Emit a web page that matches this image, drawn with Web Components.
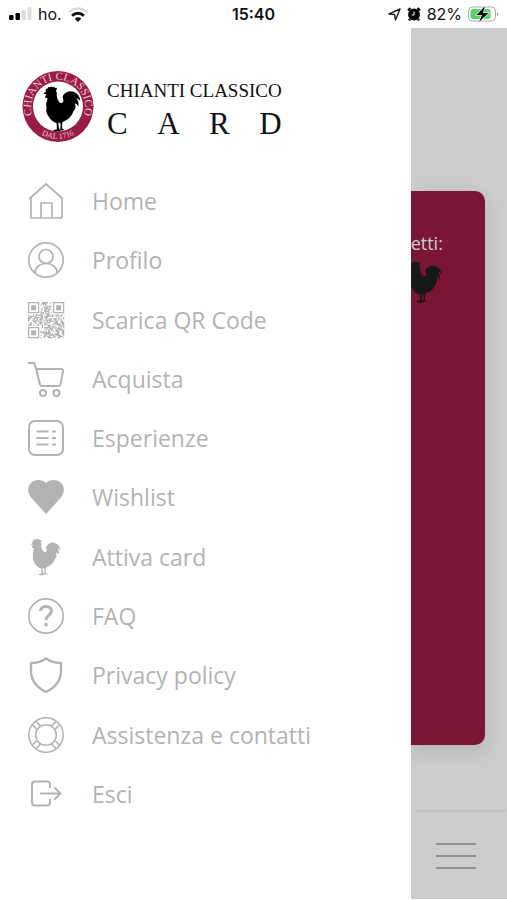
<!DOCTYPE html>
<html lang="it">
<head>
<meta charset="utf-8">
<meta name="viewport" content="width=device-width, initial-scale=1">
<title>Chianti Classico Card</title>
<style>
html, body { margin: 0; background: #fff; }
body { font-family: "Open Sans", "Noto Sans", sans-serif; }
</style>
</head>
<body>
<app-shell>
  <status-bar slot="status"></status-bar>
  <side-drawer slot="drawer">
    <brand-logo slot="brand"></brand-logo>
    <menu-item icon="home">Home</menu-item>
    <menu-item icon="user">Profilo</menu-item>
    <menu-item icon="qr">Scarica QR Code</menu-item>
    <menu-item icon="cart">Acquista</menu-item>
    <menu-item icon="list">Esperienze</menu-item>
    <menu-item icon="heart">Wishlist</menu-item>
    <menu-item icon="rooster">Attiva card</menu-item>
    <menu-item icon="help">FAQ</menu-item>
    <menu-item icon="shield">Privacy policy</menu-item>
    <menu-item icon="ring">Assistenza e contatti</menu-item>
    <menu-item icon="exit">Esci</menu-item>
  </side-drawer>
  <dimmed-page slot="page">etti:</dimmed-page>
</app-shell>
<script>
const ROOSTER = 'M85 89 L93 82 Q90 73 98 74 Q98 67 105 70 Q110 65 113 70 Q120 66 119 72 L125 71 Q128 75 123 80 Q127 85 125 94 Q126 108 134 116 Q141 119 145 113 Q147 107 143 101 Q144 90 155 85 Q168 78 179 85 Q194 91 196 111 Q190 103 184 103 Q193 112 190 128 Q185 118 180 119 Q185 132 175 143 Q170 160 155 168 Q146 171 142 176 L141 193 L149 199 L136 200 L137 179 L130 176 L132 193 L138 202 L122 203 L113 199 L126 196 L125 178 Q108 172 101 158 Q91 146 95 130 Q91 121 97 109 L97 101 Q89 105 91 96 L94 91 Z';

function qrModules() {
  const n = 29;
  let seed = 1716, d = '';
  const inFinder = (x, y) => (x < 10 && y < 10) || (x > n - 11 && y < 10) || (x < 10 && y > n - 11);
  for (let y = 0; y < n; y++) for (let x = 0; x < n; x++) {
    seed = (seed * 1103515245 + 12345) % 2147483648;
    if (!inFinder(x, y) && (seed >> 12) % 100 < 56) d += `M${x} ${y}h1v1h-1z`;
  }
  for (const [x, y] of [[0, 0], [n - 9, 0], [0, n - 9]])
    d += `M${x} ${y}h9v9h-9zM${x + 1} ${y + 1}v7h7v-7zM${x + 2.5} ${y + 2.5}h4v4h-4z`;
  return d;
}

const STRAP = 'M15.500 1.200V7.800M20.500 1.200V7.800';
const ICONS = {
  home: '<path d="M1 16 18 1l17 15M3 14v21h31V14M13 35V20h11v15" stroke-width="1.700"/>',
  user: '<circle cx="18" cy="18" r="17.200" stroke-width="1.700"/><circle cx="18" cy="14.500" r="7" stroke-width="1.700"/><path d="M7 31c0-6 5-9.500 11-9.500S29 25 29 31" stroke-width="1.700"/>',
  qr: `<path transform="scale(1.25)" fill="currentColor" stroke="none" d="${qrModules()}"/>`,
  cart: '<path d="M0 2h6.500l5.500 21.500c.4 1.200 1 1.500 2 1.500h16.500c1 0 1.500-.5 2-1.500L35 10c.2-1.200-.4-2-1.500-2H8"/><circle cx="15" cy="32" r="3"/><circle cx="28.500" cy="32" r="3"/>',
  list: '<rect x="1" y="1" width="34" height="34" rx="6"/><path d="M8.500 11.500h12M24 11.500h4M8.500 18h12M24 18h4M8.500 24.500h12M24 24.500h4" stroke-width="2.200"/>',
  heart: '<path fill="currentColor" stroke="none" d="M18 35 3.500 19C-1 13.500-1 7.500 3.500 3.500 8 0 14.500.5 18 4 21.500.5 28 0 32.500 3.500 37 7.500 37 13.500 32.500 19Z"/>',
  rooster: `<path transform="translate(-20.500 -18.500) scale(.27)" fill="currentColor" stroke="none" d="${ROOSTER}"/>`,
  help: '<circle cx="18" cy="18" r="17.200" stroke-width="1.700"/><path d="M12.500 13c0-3 2.500-4.500 5.500-4.500s5.500 1.700 5.500 4.500c0 4-5.500 4.300-5.500 9" stroke-width="3"/><path d="M18 25v3.200" stroke-width="3.200"/>',
  shield: '<path d="M18 1.500C14 4.500 9 6 3 6v8c0 9 6 16.500 15 21 9-4.500 15-12 15-21V6c-6 0-11-1.500-15-4.500Z" stroke-width="2.400"/>',
  ring: `<g stroke-width="1.500"><circle cx="18" cy="18" r="17.200"/><circle cx="18" cy="18" r="10.300"/>${[45, 135, 225, 315].map(a => `<path transform="rotate(${a} 18 18)" d="${STRAP}"/>`).join('')}</g>`,
  exit: '<path d="M22 12V8.500c0-2-1-3-3-3H7c-2 0-3 1-3 3v18c0 2 1 3 3 3h12c2 0 3-1 3-3V23M12 17.500h20M26.500 11.500l6 6-6 6" stroke-width="2"/>'
};

function define(name, html) {
  customElements.define(name, class extends HTMLElement {
    constructor() {
      super();
      this.attachShadow({ mode: 'open' }).innerHTML = typeof html === 'function' ? html(this) : html;
    }
  });
}

define('app-shell', `
<style>
:host { display: grid; grid-template: auto 1fr / 81fr 19fr; min-height: 100vh; box-sizing: border-box; padding-bottom: 1px; }
slot[name=status]::slotted(*) { grid-column: 1 / -1; }
</style>
<slot name="status"></slot><slot name="drawer"></slot><slot name="page"></slot>`);

define('status-bar', `
<style>
:host { display: grid; grid-template-columns: 1fr auto 1fr; align-items: center; height: 28px; padding: 0 8px; color: #111; font: 16px/28px Inter, sans-serif; }
.side { display: flex; align-items: center; gap: 6px; }
.end { justify-content: flex-end; }
time { font-weight: 600; }
svg { display: block; flex: none; }
</style>
<div class="side">
  <svg width="24" height="16" viewBox="0 0 24 16"><rect x="1" y="9" width="4.500" height="5" rx="1.200"/><rect x="7.500" y="7" width="4.500" height="7" rx="1.200"/><g fill="#ddd"><rect x="13.500" y="4" width="4.500" height="10" rx="1.200"/><rect x="19.500" y="1" width="4" height="13" rx="1.200"/></g></svg>
  <span>ho.</span>
  <svg width="20" height="15" viewBox="0 0 20 15" fill="none"><path d="M1 5.500C6 .2 14 .2 19 5.500" stroke="#ddd" stroke-width="2.600"/><path d="M4 8.800c3.500-3.400 8.500-3.400 12 0" stroke="#111" stroke-width="2.800"/><path d="M10 15 6.800 11.700c1.900-1.800 4.500-1.800 6.400 0Z" fill="#111"/></svg>
</div>
<time>15:40</time>
<div class="side end">
  <svg width="13" height="13" viewBox="0 0 13 13" fill="none" stroke="#222" stroke-width="1.400" stroke-linejoin="round"><path d="M1 6 12 1 7.500 12 6.500 6.500Z"/></svg>
  <svg width="14" height="14" viewBox="0 0 14 14"><circle cx="7" cy="7.500" r="5.900"/><path d="M3.500 1 1 3.500M10.500 1 13 3.500M3 12l-1 1.500M11 12l1 1.500" stroke="#111" stroke-width="2.400"/><path d="M7 4.500V8H4.800" stroke="#fff" fill="none"/></svg>
  <span>82%</span>
  <svg width="31" height="20" viewBox="0 0 31 20"><rect x=".5" y="3" width="27" height="14" rx="4" fill="#fff" stroke="#aaa"/><rect x="2.500" y="5" width="20" height="10" rx="2.500" fill="#5fd06c"/><path d="M29 8q2.500 2 0 4.500" fill="#aaa"/><path d="M17 2 8.500 11H14L11 18 20.500 9H15Z" stroke="#fff" stroke-width="1.200" paint-order="stroke"/></svg>
</div>`);

define('side-drawer', `
<style>
:host { display: flex; flex-direction: column; background: #fff; min-width: 0; }
nav { flex: 1; display: flex; flex-direction: column; justify-content: space-between; padding: 40px 16px 87px 28px; }
</style>
<slot name="brand"></slot><nav aria-label="Menu"><slot></slot></nav>`);

define('brand-logo', `
<style>
:host { display: flex; align-items: center; gap: 13px; padding: 42px 16px 0 22px; color: #111; font-family: "Liberation Serif", serif; }
svg { flex: none; }
.name { display: grid; padding-top: 7px; }
.top { font-size: 19px; line-height: 28px; }
.card { display: flex; justify-content: space-between; font-size: 31px; line-height: 38px; }
</style>
<svg width="72" height="73" viewBox="0 0 72 73" role="img" aria-label="Gallo Nero">
  <defs><path id="upper" d="M14.400 53A27 27 0 1 1 57.600 53"/><path id="lower" d="M11 57.500A33 33 0 0 0 61 57.500"/></defs>
  <circle cx="36" cy="36.500" r="35.500" fill="#981b48"/><circle cx="36" cy="36.500" r="25" fill="#fff"/>
  <path transform="translate(-7 -6) scale(.333)" d="${ROOSTER}"/>
  <g fill="#efc9d5" text-anchor="middle">
    <text font-size="11"><textPath href="#upper" startOffset="50%">CHIANTI CLASSICO</textPath></text>
    <text font-size="8"><textPath href="#lower" startOffset="50%">DAL 1716</textPath></text>
  </g>
</svg>
<div class="name"><span class="top">CHIANTI CLASSICO</span><span class="card"><span>C</span> <span>A</span> <span>R</span> <span>D</span></span></div>`);

define('menu-item', el => `
<style>
:host { display: block; color: #b3b3b3; }
a { display: flex; align-items: center; gap: 28px; color: inherit; text-decoration: none; font-size: 23px; line-height: 36px; }
svg { flex: none; display: block; overflow: visible; }
</style>
<a href="#${el.getAttribute('icon')}"><svg width="36" height="36" viewBox="0 0 36 36" fill="none" stroke="currentColor" stroke-width="2" stroke-linejoin="round" aria-hidden="true">${ICONS[el.getAttribute('icon')]}</svg><span><slot></slot></span></a>`);

define('dimmed-page', `
<style>
:host { display: flex; flex-direction: column; background: #ccc; min-width: 0; overflow: hidden; }
.card { flex: 1; margin: 163px 22px 67px 0; padding-top: 38px; box-sizing: border-box; border-radius: 0 10px 10px 0; background: #7a1633; color: #ccc; box-shadow: 0 6px 20px rgb(0 0 0 / 12%); font-size: 18px; line-height: 28px; }
svg { display: block; margin-top: 4px; }
footer { display: grid; justify-items: center; align-items: center; height: 87px; padding-right: 6px; background: #cdcdcd; box-shadow: 0 -1px 3px rgb(0 0 0 / 5%); }
button { display: grid; gap: 10px; width: 40px; padding: 0; border: 0; background: none; }
i { display: block; height: 2px; background: #8e8e8e; }
</style>
<div class="card"><slot></slot><svg width="31" height="42" viewBox="97 67 99 137" aria-hidden="true"><path fill="#181818" d="${ROOSTER}"/></svg></div>
<footer><button aria-label="Apri menu"><i></i><i></i><i></i></button></footer>`);
</script>
</body>
</html>
